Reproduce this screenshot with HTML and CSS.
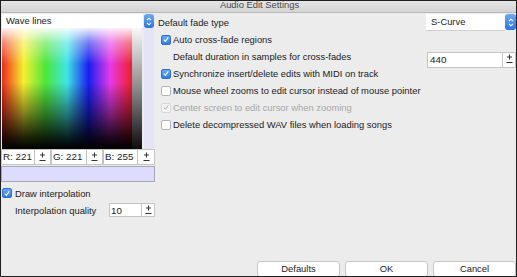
FILE: index.html
```html
<!DOCTYPE html>
<html>
<head>
<meta charset="utf-8">
<title>Audio Edit Settings</title>
<link rel="stylesheet" href="styles.css">
</head>
<body>
<div class="window">
  <div class="titlebar">Audio Edit Settings</div>
  <div class="content">
    <div class="left">
      <div class="select wave">
        <span class="sel-box">Wave lines</span>
        <span class="sel-btn"><svg width="6" height="9" viewBox="0 0 6 9"><path d="M1 3.2 L3 1.2 L5 3.2 M1 5.8 L3 7.8 L5 5.8" fill="none" stroke="#fff" stroke-width="1.1"/></svg></span>
      </div>
      <div class="picker">
        <div class="spectrum"><div class="shade"></div></div>
        <div class="graybar"></div>
        <div class="lightbar"></div>
      </div>
      <div class="rgb">
        <span class="field">R: 221</span>
        <span class="spin"><svg width="9" height="13" viewBox="0 0 9 13"><path d="M4.5 1.5 V6.5 M2 4 H7 M1.5 9.5 H7.5" stroke="#333" stroke-width="1" fill="none"/></svg></span>
        <span class="field">G: 221</span>
        <span class="spin"><svg width="9" height="13" viewBox="0 0 9 13"><path d="M4.5 1.5 V6.5 M2 4 H7 M1.5 9.5 H7.5" stroke="#333" stroke-width="1" fill="none"/></svg></span>
        <span class="field">B: 255</span>
        <span class="spin"><svg width="9" height="13" viewBox="0 0 9 13"><path d="M4.5 1.5 V6.5 M2 4 H7 M1.5 9.5 H7.5" stroke="#333" stroke-width="1" fill="none"/></svg></span>
      </div>
      <div class="swatch"></div>
      <div class="check-row draw">
        <span class="cb checked"><svg width="9" height="9" viewBox="0 0 9 9"><path d="M2 4.6 L3.8 6.5 L7 2.2" fill="none" stroke="#fff" stroke-width="1.3"/></svg></span>
        <span class="label">Draw interpolation</span>
      </div>
      <div class="quality">
        <span class="label">Interpolation quality</span>
        <span class="numbox">
          <span class="field q">10</span>
          <span class="spin"><svg width="9" height="13" viewBox="0 0 9 13"><path d="M4.5 1.5 V6.5 M2 4 H7 M1.5 9.5 H7.5" stroke="#333" stroke-width="1" fill="none"/></svg></span>
        </span>
      </div>
    </div>
    <div class="right">
      <div class="row fade">
        <span class="label">Default fade type</span>
        <div class="select curve">
          <span class="sel-box">S-Curve</span>
          <span class="sel-btn"><svg width="6" height="9" viewBox="0 0 6 9"><path d="M1 3.2 L3 1.2 L5 3.2 M1 5.8 L3 7.8 L5 5.8" fill="none" stroke="#fff" stroke-width="1.1"/></svg></span>
        </div>
      </div>
      <div class="row opt">
        <span class="cb checked"><svg width="9" height="9" viewBox="0 0 9 9"><path d="M2 4.6 L3.8 6.5 L7 2.2" fill="none" stroke="#fff" stroke-width="1.3"/></svg></span>
        <span class="label">Auto cross-fade regions</span>
      </div>
      <div class="row duration">
        <span class="label">Default duration in samples for cross-fades</span>
        <span class="numbox">
          <span class="field d">440</span>
          <span class="spin"><svg width="9" height="13" viewBox="0 0 9 13"><path d="M4.5 1.5 V6.5 M2 4 H7 M1.5 9.5 H7.5" stroke="#333" stroke-width="1" fill="none"/></svg></span>
        </span>
      </div>
      <div class="row opt">
        <span class="cb checked"><svg width="9" height="9" viewBox="0 0 9 9"><path d="M2 4.6 L3.8 6.5 L7 2.2" fill="none" stroke="#fff" stroke-width="1.3"/></svg></span>
        <span class="label">Synchronize insert/delete edits with MIDI on track</span>
      </div>
      <div class="row opt">
        <span class="cb"></span>
        <span class="label">Mouse wheel zooms to edit cursor instead of mouse pointer</span>
      </div>
      <div class="row opt disabled">
        <span class="cb dis"><svg width="9" height="9" viewBox="0 0 9 9"><path d="M2 4.6 L3.8 6.5 L7 2.2" fill="none" stroke="#a9a9a9" stroke-width="1.1"/></svg></span>
        <span class="label">Center screen to edit cursor when zooming</span>
      </div>
      <div class="row opt">
        <span class="cb"></span>
        <span class="label">Delete decompressed WAV files when loading songs</span>
      </div>
    </div>
  </div>
  <div class="buttons">
    <span class="btn defaults">Defaults</span>
    <span class="btn ok">OK</span>
    <span class="btn cancel">Cancel</span>
  </div>
</div>
</body>
</html>
```
FILE: styles.css
```css
* { box-sizing: border-box; }
html, body { margin: 0; padding: 0; }
body {
  width: 517px;
  height: 277px;
  overflow: hidden;
  font-family: "Liberation Sans", Arial, sans-serif;
  font-size: 9.4px;
  color: #1b1b1b;
}
.window {
  width: 517px;
  height: 277px;
  border: 1px solid #202020;
  background: #ececec;
  display: flex;
  flex-direction: column;
  overflow: hidden;
}
.titlebar {
  height: 12px;
  flex: none;
  background: linear-gradient(#e6e6e6, #d4d4d4);
  border-bottom: 1px solid #b8b8b8;
  text-align: center;
  color: #4a4a4a;
  line-height: 8px;
  padding-left: 2px;
}
.content {
  display: flex;
  flex: none;
}
.left {
  width: 154px;
  flex: none;
  display: flex;
  flex-direction: column;
}
.select {
  display: flex;
  height: 14px;
}
.select.wave { margin: 1px 0 0 1px; }
.sel-box {
  background: #fff;
  line-height: 14px;
  padding-left: 4px;
  box-shadow: 0 1px 0 #d0d0d0;
}
.wave .sel-box { width: 141px; }
.sel-btn {
  width: 10px;
  height: 14px;
  margin-left: 1px;
  border-radius: 3px;
  background: linear-gradient(#6eaaf5, #2a72e6);
  display: flex;
  align-items: center;
  justify-content: center;
}
.picker {
  display: flex;
  height: 121px;
  margin-left: 1px;
}
.spectrum {
  width: 130px;
  height: 100%;
  background: linear-gradient(to right, #f02a1e 0%, #f6f030 16.7%, #4ee63a 33.3%, #3ee6e6 50%, #1a1ef0 66.7%, #e63ae8 83.3%, #f01e28 100%);
}
.shade {
  width: 100%;
  height: 100%;
  background: linear-gradient(to bottom, rgba(255,255,255,0.92) 0%, rgba(255,255,255,0.4) 12%, rgba(255,255,255,0) 30%, rgba(0,0,0,0) 45%, rgba(0,0,0,0.45) 70%, rgba(0,0,0,0.85) 90%, #000 100%);
}
.graybar {
  width: 10px;
  background: linear-gradient(#f8f8f8, #8a8a8a 50%, #0c0c0c);
}
.lightbar {
  width: 10px;
  margin-left: 2px;
  background: #e4e4f6;
}
.rgb {
  display: grid;
  grid-template-columns: 34px 16px 36px 16px 35px 17px;
  height: 16px;
}
.field {
  background: #fff;
  border: 1px solid #c4c4c4;
  line-height: 14px;
  padding-left: 1px;
  font-size: 9.8px;
}
.spin {
  background: #fff;
  border: 1px solid #c4c4c4;
  border-left: none;
  display: flex;
  align-items: center;
  justify-content: center;
}
.swatch {
  height: 16px;
  margin-top: 1px;
  background: #dcdcff;
  border: 1px solid #a8a8b4;
}
.check-row {
  display: flex;
  align-items: center;
  margin-top: 6px;
  height: 10px;
}
.draw { margin-left: 1px; }
.cb {
  width: 10px;
  height: 10px;
  flex: none;
  border: 1px solid #b4b4b4;
  border-radius: 2px;
  background: #fff;
  display: flex;
  align-items: center;
  justify-content: center;
}
.cb.checked {
  border-color: #2d6fd6;
  background: linear-gradient(#6aa8f6, #2f7bed);
}
.cb.dis {
  border-color: #dadada;
  background: #f3f3f3;
}
.draw .label { margin-left: 3px; }
.quality {
  display: flex;
  align-items: center;
  margin-top: 5px;
  height: 14px;
  padding-left: 14px;
}
.quality .label { width: 94px; }
.numbox { display: flex; height: 14px; }
.field.q { width: 33px; }
.numbox .spin { width: 13px; }
.right {
  flex: 1;
  display: flex;
  flex-direction: column;
  padding-left: 3px;
}
.row {
  display: flex;
  align-items: center;
  height: 17px;
}
.row.fade { height: 18px; justify-content: space-between; }
.curve .sel-box { width: 79px; line-height: 16px; padding-left: 5px; }
.curve { height: 16px; }
.curve .sel-btn { height: 16px; width: 11px; margin-left: 0; }
.row.opt { padding-left: 3px; }
.row.opt .label { margin-left: 2px; }
.row.duration { padding-left: 15px; justify-content: space-between; }
.row.duration .numbox { height: 16px; margin-top: 6px; }
.field.d { width: 76px; line-height: 14px; padding-left: 2px; }
.row.duration .spin { width: 13px; }
.disabled .label { color: #a6a6a6; }
.buttons {
  margin-top: auto;
  display: flex;
  justify-content: flex-end;
  gap: 5px;
  height: 15px;
}
.btn {
  width: 83px;
  height: 16px;
  background: #fff;
  border: 1px solid #c6c6c6;
  border-radius: 3px;
  text-align: center;
  line-height: 13px;
}
```
